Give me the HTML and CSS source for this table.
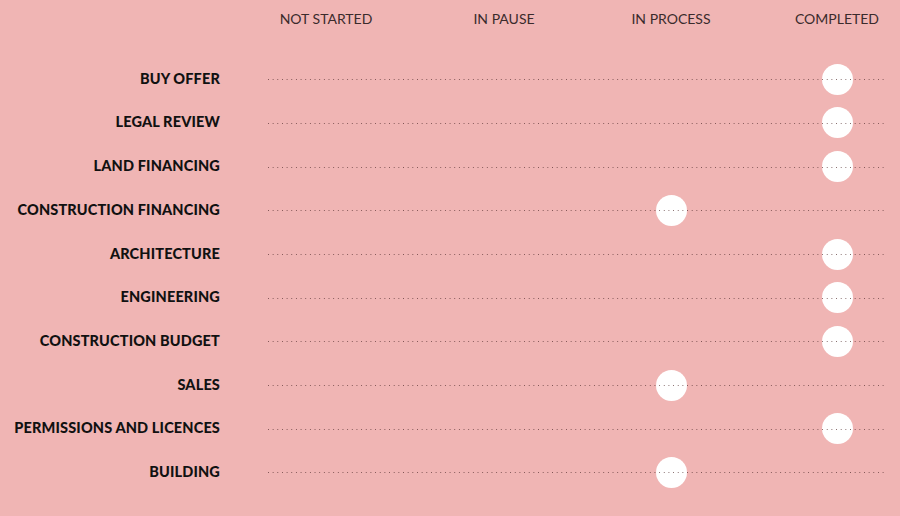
FILE: index.html
```html
<!DOCTYPE html>
<html lang="en">
<head>
<meta charset="utf-8">
<title>Project status</title>
<link rel="stylesheet" href="styles.css">
</head>
<body>
<main class="board">
  <header class="head">
    <div class="head-spacer"></div>
    <div class="cols">
      <span class="h c-ns">NOT STARTED</span>
      <span class="h c-ip">IN PAUSE</span>
      <span class="h c-pr">IN PROCESS</span>
      <span class="h c-co">COMPLETED</span>
    </div>
  </header>
  <div class="row"><span class="label">BUY OFFER</span><div class="track cols"><span class="dot c-co"></span></div></div>
  <div class="row"><span class="label">LEGAL REVIEW</span><div class="track cols"><span class="dot c-co"></span></div></div>
  <div class="row"><span class="label">LAND FINANCING</span><div class="track cols"><span class="dot c-co"></span></div></div>
  <div class="row"><span class="label">CONSTRUCTION FINANCING</span><div class="track cols"><span class="dot c-pr"></span></div></div>
  <div class="row"><span class="label">ARCHITECTURE</span><div class="track cols"><span class="dot c-co"></span></div></div>
  <div class="row"><span class="label">ENGINEERING</span><div class="track cols"><span class="dot c-co"></span></div></div>
  <div class="row"><span class="label">CONSTRUCTION BUDGET</span><div class="track cols"><span class="dot c-co"></span></div></div>
  <div class="row"><span class="label">SALES</span><div class="track cols"><span class="dot c-pr"></span></div></div>
  <div class="row"><span class="label">PERMISSIONS AND LICENCES</span><div class="track cols"><span class="dot c-co"></span></div></div>
  <div class="row"><span class="label">BUILDING</span><div class="track cols"><span class="dot c-pr"></span></div></div>
</main>
</body>
</html>
```

FILE: styles.css
```css
html, body {
  margin: 0;
  padding: 0;
  overflow: hidden;
}
body {
  background: #f0b5b4;
  width: 900px;
  height: 516px;
}
.board {
  display: flex;
  flex-direction: column;
}
.head,
.row {
  display: grid;
  grid-template-columns: 220px 618px;
  column-gap: 48px;
}
.head {
  height: 36px;
  margin-bottom: 21.45px;
  align-items: center;
}
.cols {
  display: grid;
  grid-template-columns: 116px 240px 94px 70px 98px;
  align-items: center;
}
.c-ns { grid-column: 1; }
.c-ip { grid-column: 2; }
.c-pr { grid-column: 3; }
.c-co { grid-column: 5; }
.h {
  justify-self: center;
  white-space: nowrap;
  font-family: "Lato", "Open Sans", sans-serif;
  font-weight: 400;
  font-size: 14px;
  color: #3b2b2c;
}
.row {
  height: 43.7px;
  align-items: center;
}
.label {
  justify-self: end;
  white-space: nowrap;
  font-family: "Lato", sans-serif;
  font-weight: 900;
  font-size: 14.5px;
  letter-spacing: 0.15px;
  color: #111;
  margin-bottom: 2px;
}
.track {
  position: relative;
  height: 100%;
}
.track::after {
  content: "";
  position: absolute;
  z-index: 1;
  left: 0;
  right: 0;
  top: 50%;
  height: 1px;
  background-image: linear-gradient(to right, rgba(80, 45, 45, 0.7) 0 1px, transparent 1px);
  background-size: 4.67px 1px;
}
.dot {
  justify-self: center;
  width: 31px;
  height: 31px;
  border-radius: 50%;
  background: #fff;
}
```
